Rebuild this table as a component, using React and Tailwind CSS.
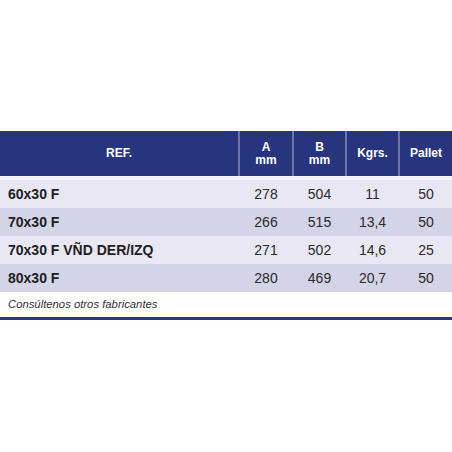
const rows = [
  { ref: "60x30 F", a: "278", b: "504", k: "11", p: "50" },
  { ref: "70x30 F", a: "266", b: "515", k: "13,4", p: "50" },
  { ref: "70x30 F VÑD DER/IZQ", a: "271", b: "502", k: "14,6", p: "25" },
  { ref: "80x30 F", a: "280", b: "469", k: "20,7", p: "50" },
];

export default function App() {
  return (
    <div
      className="w-[452px] h-[452px] bg-white pt-[131px]"
      style={{ fontFamily: '"Liberation Sans", Arial, sans-serif' }}
    >
      {/* HEADER */}
      <div className="grid grid-cols-[238px_54px_53px_53px_54px] h-[45px] bg-[#27357e] text-white font-bold text-[12px] leading-[13px]">
        <div className="flex items-center justify-center">REF.</div>
        <div className="flex flex-col items-center justify-center border-l-2 border-[#6e76a8]">
          <span>A</span>
          <span>mm</span>
        </div>
        <div className="flex flex-col items-center justify-center border-l-2 border-[#6e76a8]">
          <span>B</span>
          <span>mm</span>
        </div>
        <div className="flex items-center justify-center border-l-2 border-[#6e76a8]">Kgrs.</div>
        <div className="flex items-center justify-center border-l-2 border-[#6e76a8]">Pallet</div>
      </div>

      <div className="h-[4px] bg-[#f4f4f8]" />

      {/* ROWS */}
      {rows.map((r, i) => (
        <div
          key={r.ref}
          className={`grid grid-cols-[238px_54px_53px_53px_54px] h-[28px] items-center text-[14px] text-[#2a2a2a] ${
            i % 2 === 0 ? "bg-[#e8e7f3]" : "bg-[#d4d3e7]"
          }`}
        >
          <div className="pl-[8px] font-bold text-[#1e1e1e]">{r.ref}</div>
          <div className="text-center pl-[2px]">{r.a}</div>
          <div className="text-center pl-[2px]">{r.b}</div>
          <div className="text-center pl-[2px]">{r.k}</div>
          <div className="text-center pl-[2px]">{r.p}</div>
        </div>
      ))}

      {/* FOOTER */}
      <div className="h-[25px] flex items-center pl-[8px] italic text-[11.3px] text-[#333]">
        Consúltenos otros fabricantes
      </div>
      <div className="h-[3px] bg-[#2b3a80]" />
    </div>
  );
}
